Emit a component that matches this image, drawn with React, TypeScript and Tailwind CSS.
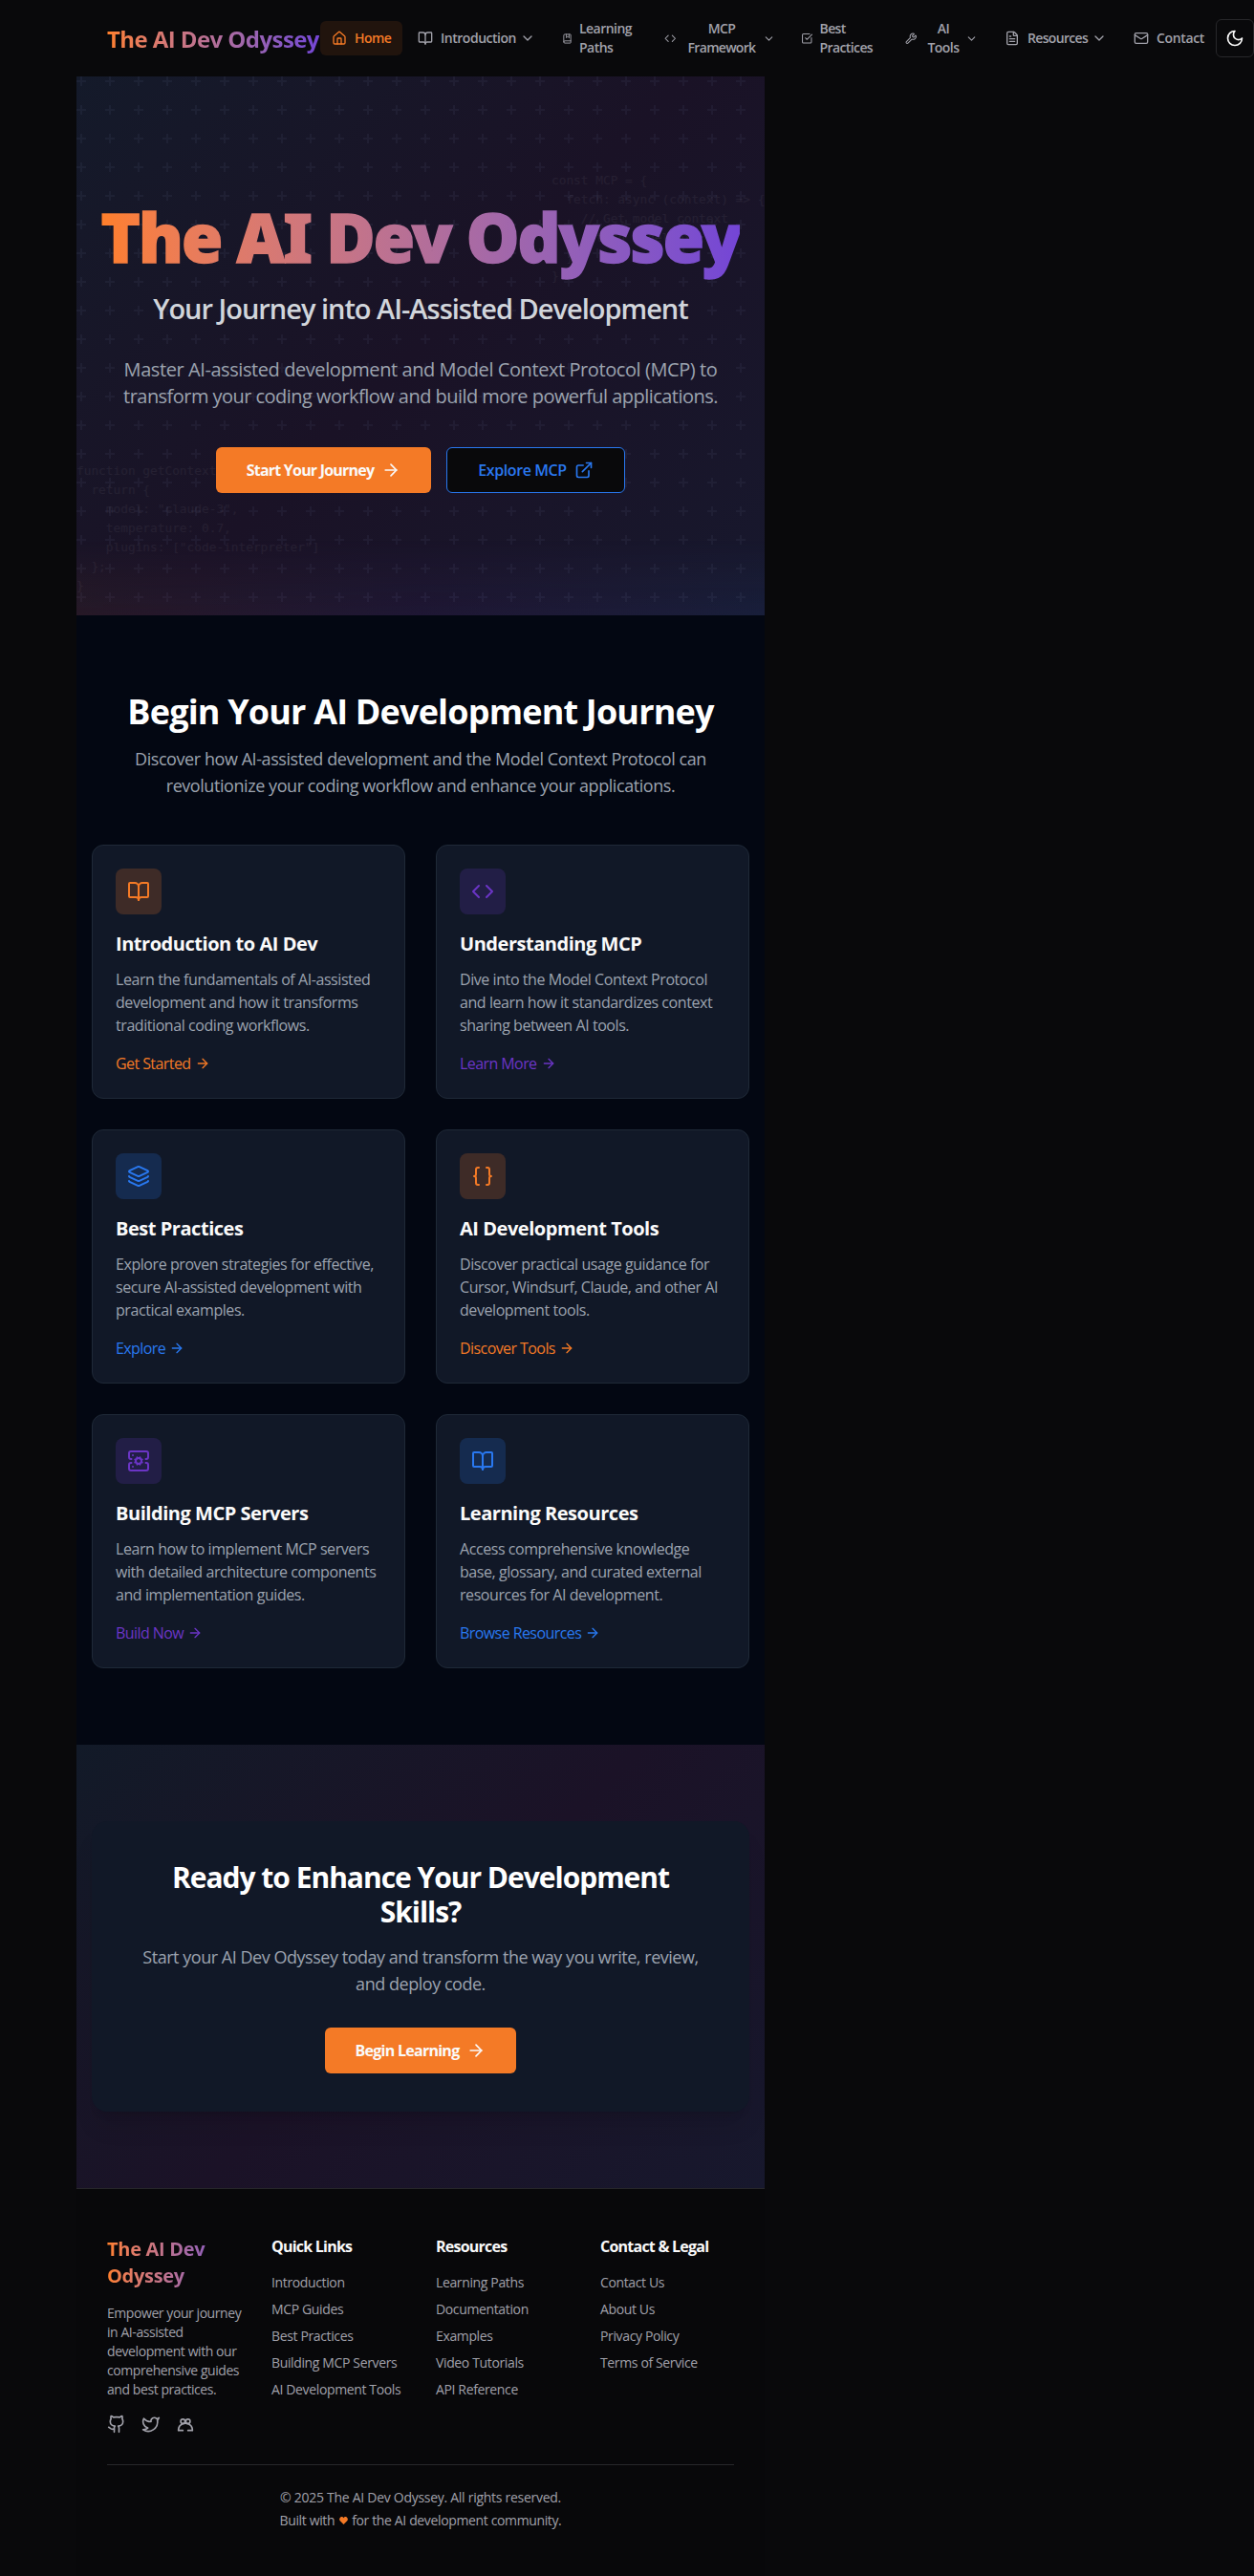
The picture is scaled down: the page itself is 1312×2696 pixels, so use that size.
import type { ReactNode } from "react";
import {
  ArrowRight,
  BookMarked,
  BookOpen,
  Braces,
  ChevronDown,
  Code,
  ExternalLink,
  FileText,
  Github,
  House,
  Layers,
  Mail,
  ServerCog,
  SquareCheckBig,
  Twitter,
  Wrench,
} from "lucide-react";

const GRADIENT_TEXT = "bg-linear-to-r from-[#ff7f2a] to-[#7445d6] bg-clip-text text-transparent";

function NavItem({ width, children, active }: { width: string; children: ReactNode; active?: boolean }) {
  return (
    <a
      className={`flex h-9 shrink-0 items-center rounded-md pl-3 text-sm font-semibold tracking-[-0.038em] ${width} ${
        active ? "bg-[#f47a26]/10 text-[#f47a26]" : "text-[#a1a1aa]"
      }`}
    >
      {children}
    </a>
  );
}

function MoonIcon() {
  return (
    <svg viewBox="0 0 24 24" className="size-5 text-[#fafafa]" fill="none" stroke="currentColor" strokeWidth="2" strokeLinecap="round" strokeLinejoin="round">
      <path d="M12 3a6 6 0 0 0 9 9 9 9 0 1 1-9-9Z" />
    </svg>
  );
}

function CommunityIcon() {
  return (
    <svg viewBox="0 0 24 24" className="size-5" fill="none" stroke="currentColor" strokeWidth="2" strokeLinecap="round" strokeLinejoin="round">
      <circle cx="8.8" cy="8.6" r="2.7" />
      <circle cx="15.2" cy="8.6" r="2.7" />
      <path d="M8.8 20H3.2c0-3.8 1.8-6.8 4.8-8 1.200-.6 2.500-.9 4-.9s2.800.3 4 .9c3 1.200 4.800 4.200 4.800 8h-5.600" />
    </svg>
  );
}

function Header() {
  return (
    <header className="flex h-20 w-[1312px] items-center bg-[#09090b] pl-28">
      <a className="w-[223px] shrink-0 pt-0.5 text-2xl font-bold tracking-[-0.024em] whitespace-nowrap">
        <span className={GRADIENT_TEXT}>The AI Dev Odyssey</span>
      </a>
      <nav className="flex items-center gap-1">
        <NavItem width="w-[86px]" active>
          <House className="mr-2 size-4 shrink-0" />
          Home
        </NavItem>
        <NavItem width="w-[147.500px]">
          <BookOpen className="mr-2 size-4 shrink-0" />
          <span className="w-[83px] tracking-[-0.034em]">Introduction</span>
          <ChevronDown className="size-4 shrink-0" />
        </NavItem>
        <NavItem width="w-[102.500px]">
          <BookMarked className="mr-[7.500px] -ml-px size-[11px] shrink-0" />
          <span className="leading-5">Learning<br />Paths</span>
        </NavItem>
        <NavItem width="w-[139.500px]">
          <Code className="mr-2 size-[12.500px] shrink-0" />
          <span className="mr-[3px] w-[79px] text-center leading-5 tracking-[-0.05em]">MCP<br />Framework</span>
          <ChevronDown className="size-[13px] shrink-0" />
        </NavItem>
        <NavItem width="w-[104px]">
          <SquareCheckBig className="mr-[7.500px] -ml-px size-[12.500px] shrink-0" />
          <span className="leading-5 tracking-[-0.043em]">Best<br />Practices</span>
        </NavItem>
        <NavItem width="w-[100.500px]">
          <Wrench className="mr-2 size-[12.500px] shrink-0" />
          <span className="mr-[3px] w-10 text-center leading-5">AI<br />Tools</span>
          <ChevronDown className="size-[13px] shrink-0" />
        </NavItem>
        <NavItem width="w-[131px]">
          <FileText className="mr-2 size-4 shrink-0" />
          <span className="w-[67px] tracking-[-0.048em]">Resources</span>
          <ChevronDown className="size-4 shrink-0" />
        </NavItem>
        <NavItem width="w-[98px]">
          <Mail className="mr-2 size-4 shrink-0" />
          <span className="tracking-[-0.025em]">Contact</span>
        </NavItem>
      </nav>
      <button className="flex size-10 shrink-0 items-center justify-center rounded-md border border-[#27272a]">
        <MoonIcon />
      </button>
    </header>
  );
}

const CODE_TOP = `const MCP = {
  fetch: async (context) => {
    // Get model context
    return modelData;
  }
}`;

const CODE_BOTTOM = `function getContext() {
  return {
    model: "claude-3",
    temperature: 0.7,
    plugins: ["code-interpreter"]
  };
}`;

const CODE_CLASS = "absolute font-['DejaVu_Sans_Mono',monospace] text-[12.800px] leading-5 text-white/[0.05]";

function Hero() {
  return (
    <section className="relative h-[564px] overflow-hidden bg-linear-135 from-[#141a2a] via-[#1a1226] to-[#17182d]">
      <svg className="absolute inset-0 size-full" aria-hidden="true">
        <defs>
          <pattern id="plus" width="30" height="30" patternUnits="userSpaceOnUse">
            <path d="M6 4V0H4v4H0v2h4v4h2V6h4V4H6z" fill="#9ca3d8" fillOpacity="0.06" />
          </pattern>
        </defs>
        <rect width="100%" height="100%" fill="url(#plus)" />
      </svg>
      <div className="absolute inset-x-0 bottom-0 h-20 bg-linear-to-r from-[#f47a26]/[0.06] via-[#6b35c5]/[0.07] to-[#2978f0]/[0.07] mask-t-from-0% mask-t-to-100%" />
      <pre className={`${CODE_CLASS} top-[99px] left-[497px]`}>{CODE_TOP}</pre>
      <pre className={`${CODE_CLASS} top-[403px] left-0`}>{CODE_BOTTOM}</pre>
      <div className="relative flex flex-col items-center pt-[132px] text-center whitespace-nowrap">
        <h1 className="font-['Noto_Sans',sans-serif] text-[70px] leading-[72px] font-black tracking-[-0.028em] [-webkit-text-stroke:1.500px_transparent]">
          <span className={`${GRADIENT_TEXT} pb-3`}>The AI Dev Odyssey</span>
        </h1>
        <p className="mt-[21px] text-[29px] leading-9 font-semibold tracking-[-0.035em] text-[#d1d5db]">
          Your Journey into AI-Assisted Development
        </p>
        <p className="mt-8 text-xl leading-7 text-[#9ca3af]">
          <span className="block tracking-[-0.021em]">Master AI-assisted development and Model Context Protocol (MCP) to</span>
          <span className="block tracking-[-0.027em]">transform your coding workflow and build more powerful applications.</span>
        </p>
        <div className="mt-[39px] flex gap-4">
          <a className="flex h-12 w-[225px] items-center justify-center rounded-md bg-[#f47a26] font-bold tracking-[-0.049em] text-[#fafafa]">
            Start Your Journey
            <ArrowRight className="ml-2 size-5" />
          </a>
          <a className="flex h-12 w-[187px] items-center justify-center rounded-md border border-[#2978f0] bg-[#09090b] font-semibold tracking-[-0.025em] text-[#2978f0]">
            Explore MCP
            <ExternalLink className="ml-2 size-5" />
          </a>
        </div>
      </div>
    </section>
  );
}

type Tone = "orange" | "purple" | "blue";

const TONES: Record<Tone, { box: string; text: string }> = {
  orange: { box: "bg-[#f47a26]/20", text: "text-[#f47a26]" },
  purple: { box: "bg-[#6b35c5]/20", text: "text-[#6b35c5]" },
  blue: { box: "bg-[#2978f0]/20", text: "text-[#2978f0]" },
};

const CARDS: { icon: typeof BookOpen; tone: Tone; title: string; lines: string[]; link: string }[] = [
  { icon: BookOpen, tone: "orange", title: "Introduction to AI Dev", lines: ["Learn the fundamentals of AI-assisted", "development and how it transforms", "traditional coding workflows."], link: "Get Started" },
  { icon: Code, tone: "purple", title: "Understanding MCP", lines: ["Dive into the Model Context Protocol", "and learn how it standardizes context", "sharing between AI tools."], link: "Learn More" },
  { icon: Layers, tone: "blue", title: "Best Practices", lines: ["Explore proven strategies for effective,", "secure AI-assisted development with", "practical examples."], link: "Explore" },
  { icon: Braces, tone: "orange", title: "AI Development Tools", lines: ["Discover practical usage guidance for", "Cursor, Windsurf, Claude, and other AI", "development tools."], link: "Discover Tools" },
  { icon: ServerCog, tone: "purple", title: "Building MCP Servers", lines: ["Learn how to implement MCP servers", "with detailed architecture components", "and implementation guides."], link: "Build Now" },
  { icon: BookOpen, tone: "blue", title: "Learning Resources", lines: ["Access comprehensive knowledge", "base, glossary, and curated external", "resources for AI development."], link: "Browse Resources" },
];

function Features() {
  return (
    <section className="bg-[#030712] px-4 py-20">
      <div className="text-center whitespace-nowrap">
        <h2 className="pt-px text-4xl leading-10 font-bold tracking-[-0.023em] text-white">Begin Your AI Development Journey</h2>
        <p className="mt-[15px] text-lg leading-7 tracking-[-0.024em] text-[#9ca3af]">
          Discover how AI-assisted development and the Model Context Protocol can
          <br />
          revolutionize your coding workflow and enhance your applications.
        </p>
      </div>
      <div className="mt-12 grid grid-cols-2 gap-8">
        {CARDS.map(({ icon: Icon, tone, title, lines, link }) => (
          <article key={title} className="rounded-xl border border-[#1f2937] bg-[#111827] p-6 whitespace-nowrap">
            <div className={`flex size-12 items-center justify-center rounded-lg ${TONES[tone].box} ${TONES[tone].text}`}>
              <Icon className="size-6" />
            </div>
            <h3 className="mt-[17px] text-xl leading-7 font-bold tracking-[-0.023em] text-[#fafafa]">{title}</h3>
            <p className="mt-[11px] leading-6 tracking-[-0.027em] text-[#9ca3af]">
              {lines.map((line) => (
                <span key={line} className="block">{line}</span>
              ))}
            </p>
            <a className={`mt-4 flex items-center leading-6 tracking-[-0.036em] ${TONES[tone].text}`}>
              {link}
              <ArrowRight className="ml-1 size-4" />
            </a>
          </article>
        ))}
      </div>
    </section>
  );
}

function CallToAction() {
  return (
    <section className="bg-linear-135 from-[#121a28] via-[#1b1227] to-[#17182d] px-4 py-20">
      <div className="flex flex-col items-center rounded-2xl bg-[#111827] p-10 text-center whitespace-nowrap shadow-xl">
        <h2 className="pt-px text-3xl leading-9 font-bold tracking-[-0.034em] text-white">
          Ready to Enhance Your Development
          <br />
          Skills?
        </h2>
        <p className="mt-[15px] text-lg leading-7 tracking-[-0.026em] text-[#9ca3af]">
          Start your AI Dev Odyssey today and transform the way you write, review,
          <br />
          and deploy code.
        </p>
        <a className="mt-8 flex h-12 w-[200px] items-center justify-center rounded-md bg-[#f47a26] font-bold tracking-[-0.046em] text-[#fafafa]">
          Begin Learning
          <ArrowRight className="ml-2 size-5" />
        </a>
      </div>
    </section>
  );
}

const LINK_COLUMNS = [
  { title: "Quick Links", links: ["Introduction", "MCP Guides", "Best Practices", "Building MCP Servers", "AI Development Tools"] },
  { title: "Resources", links: ["Learning Paths", "Documentation", "Examples", "Video Tutorials", "API Reference"] },
  { title: "Contact & Legal", links: ["Contact Us", "About Us", "Privacy Policy", "Terms of Service"] },
];

function Footer() {
  return (
    <footer className="border-t border-[#27272a] bg-[#08080a] px-8 py-12 text-sm tracking-[-0.026em] text-[#a1a1aa]">
      <div className="grid grid-cols-4 gap-8 whitespace-nowrap">
        <div>
          <h3 className={`pt-px text-xl leading-7 font-bold tracking-[-0.015em] ${GRADIENT_TEXT}`}>
            The AI Dev
            <br />
            Odyssey
          </h3>
          <p className="mt-[15px] leading-5 tracking-[-0.031em]">
            Empower your journey
            <br />
            in AI-assisted
            <br />
            development with our
            <br />
            comprehensive guides
            <br />
            and best practices.
          </p>
          <div className="mt-4 flex gap-4">
            <Github className="size-5" />
            <Twitter className="size-5" />
            <CommunityIcon />
          </div>
        </div>
        {LINK_COLUMNS.map(({ title, links }) => (
          <div key={title}>
            <h4 className="text-base leading-6 font-bold tracking-[-0.048em] text-[#fafafa]">{title}</h4>
            <ul className="mt-4 space-y-2 leading-5">
              {links.map((link) => (
                <li key={link}>{link}</li>
              ))}
            </ul>
          </div>
        ))}
      </div>
      <div className="mt-8 border-t border-[#27272a] pt-6 text-center leading-5">
        <p className="tracking-[-0.02em]">© 2025 The AI Dev Odyssey. All rights reserved.</p>
        <p className="mt-1 flex items-center justify-center">
          Built with
          <svg viewBox="0 0 18 16" className="mr-1 ml-[5px] h-2 w-[9px] fill-[#f47a26]">
            <path d="M9 16 1.500 8.500C-.5 6.200 0 2.500 2.500.8 4.800-.6 7.700.1 9 2.500 10.300.1 13.200-.6 15.500.8 18 2.500 18.500 6.200 16.500 8.500Z" />
          </svg>
          for the AI development community.
        </p>
      </div>
    </footer>
  );
}

export default function App() {
  return (
    <div className="min-h-[2696px] w-[1312px] overflow-hidden bg-[#09090b] font-['Open_Sans','Noto_Sans',sans-serif]">
      <Header />
      <main className="ml-20 w-[720px]">
        <Hero />
        <Features />
        <CallToAction />
        <Footer />
      </main>
    </div>
  );
}
